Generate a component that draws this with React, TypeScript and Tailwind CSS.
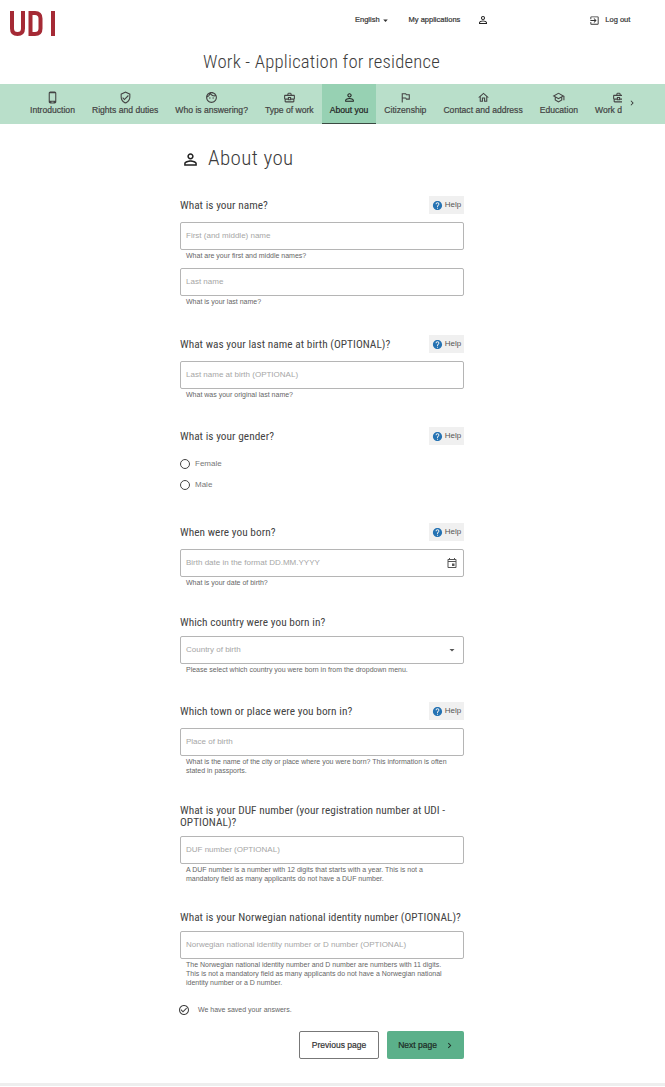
import React from "react";
import {
  MdArrowDropDown,
  MdCheckCircleOutline,
  MdChevronRight,
  MdExitToApp,
  MdHelp,
  MdOutlineBusinessCenter,
  MdOutlineEvent,
  MdOutlineFace,
  MdOutlineHome,
  MdOutlinePhoneAndroid,
  MdOutlineSchool,
  MdOutlineVerifiedUser,
  MdOutlinedFlag,
  MdPersonOutline,
} from "react-icons/md";

const navItems = [
  { label: "Introduction", icon: MdOutlinePhoneAndroid },
  { label: "Rights and duties", icon: MdOutlineVerifiedUser },
  { label: "Who is answering?", icon: MdOutlineFace },
  { label: "Type of work", icon: MdOutlineBusinessCenter },
  { label: "About you", icon: MdPersonOutline, active: true },
  { label: "Citizenship", icon: MdOutlinedFlag },
  { label: "Contact and address", icon: MdOutlineHome },
  { label: "Education", icon: MdOutlineSchool },
  { label: "Work details", icon: MdOutlineBusinessCenter },
];

const HelpButton = () => (
  <button className="flex h-[18px] w-[35px] shrink-0 items-center justify-center gap-[2px] bg-[#f0f0f0] text-[8px] text-[#555]">
    <MdHelp className="text-[11px] text-[#2472b3]" />
    Help
  </button>
);

const Question = ({ children, help, className }: { children: React.ReactNode; help?: boolean; className?: string }) => (
  <div className={`flex items-center justify-between ${className ?? ""}`}>
    <h3 className="translate-y-[1px] whitespace-nowrap font-['Roboto',sans-serif] text-[11.3px] leading-[12px] tracking-[0.05px] text-[#444] [font-stretch:75%]">{children}</h3>
    {help && <HelpButton />}
  </div>
);

const Input = ({ placeholder, icon }: { placeholder: string; icon?: React.ReactNode }) => (
  <div className="flex h-[28px] items-center justify-between rounded-[2px] border border-[#b5b5b5] bg-white pl-[5px] pr-[5px]">
    <span className="pb-[1px] text-[8px] text-[#a6a6a6]">{placeholder}</span>
    {icon}
  </div>
);

const Hint = ({ children }: { children: React.ReactNode }) => (
  <p className="mt-[1px] pl-[6px] text-[7px] leading-[9px] text-[#666]">{children}</p>
);

const Radio = ({ label }: { label: string }) => (
  <div className="flex h-[21px] items-center gap-[5px]">
    <span className="h-[10px] w-[10px] rounded-full border border-[#444]" />
    <span className="text-[8px] text-[#777]">{label}</span>
  </div>
);

export default function App() {
  return (
    <div className="h-[1087px] w-[665px] overflow-hidden bg-white font-['Liberation_Sans',Arial,sans-serif]">
      {/* Header */}
      <header className="relative h-[50px]">
        <svg className="absolute left-[10px] top-[11px]" width="45" height="25" viewBox="0 0 45 25" fill="none" stroke="#a52a35" strokeWidth="4">
          <path d="M2 0V17.5Q2 23 7.5 23Q13 23 13 17.5V0" />
          <path d="M20.5 2H25Q30.5 2 30.5 7.5V17.5Q30.5 23 25 23H20.5Z" />
          <path d="M43 0V25" />
        </svg>
        <div className="flex h-[40px] items-center pl-[355px] text-[7.5px] text-[#333] [-webkit-text-stroke:0.2px]">
          <span className="flex items-center">
            English
            <MdArrowDropDown className="text-[11px]" />
          </span>
          <span className="ml-[18px]">My applications</span>
          <MdPersonOutline className="ml-[17px] text-[12px] text-[#222]" />
          <span className="ml-[100px] flex items-center gap-[5px]">
            <MdExitToApp className="text-[11px]" />
            Log out
          </span>
        </div>
      </header>
      <h1 className="h-[34px] pr-[22px] text-center font-['Roboto',sans-serif] text-[18.7px] font-light leading-[24px] tracking-[0.2px] text-[#3c3c3c] [font-stretch:75%]">
        Work - Application for residence
      </h1>

      {/* Steps */}
      <nav className="flex h-[40px] bg-[#b9dfca] pl-[23px]">
        <div className="flex w-[599px] gap-[3px] overflow-hidden">
          {navItems.map((item) => {
            const Icon = item.icon;
            return (
              <div
                key={item.label}
                className={`flex h-[40px] shrink-0 flex-col items-center pt-[7px] ${
                  item.active ? "-mx-[2px] border-b border-[#3a4a42] bg-[#97d1b3] px-[8px] text-[#222]" : "px-[7px] text-[#444]"
                }`}
              >
                <Icon className="h-[13px] w-[13px]" />
                <span className="mt-[1px] whitespace-nowrap text-[8.6px] leading-[11px] [-webkit-text-stroke:0.2px]">{item.label}</span>
              </div>
            );
          })}
        </div>
        <MdChevronRight className="ml-[5px] mt-[14px] text-[10px] text-[#333]" />
      </nav>

      {/* Form */}
      <main className="ml-[180px] w-[284px]">
        <h2 className="ml-[1px] mt-[23px] flex h-[24px] items-center gap-[8px] font-['Roboto',sans-serif] text-[21px] font-light tracking-[0.4px] text-[#3c3c3c] [font-stretch:75%]">
          <MdPersonOutline className="text-[19px] text-[#222]" />
          About you
        </h2>

        <Question help className="mt-[25px] mb-[8px]">What is your name?</Question>
        <Input placeholder="First (and middle) name" />
        <Hint>What are your first and middle names?</Hint>
        <div className="mt-[8px]">
          <Input placeholder="Last name" />
        </div>
        <Hint>What is your last name?</Hint>

        <Question help className="mt-[29px] mb-[8px]">What was your last name at birth (OPTIONAL)?</Question>
        <Input placeholder="Last name at birth (OPTIONAL)" />
        <Hint>What was your original last name?</Hint>

        <Question help className="mt-[28px] mb-[8px]">What is your gender?</Question>
        <Radio label="Female" />
        <Radio label="Male" />

        <Question help className="mt-[28px] mb-[8px]">When were you born?</Question>
        <Input placeholder="Birth date in the format DD.MM.YYYY" icon={<MdOutlineEvent className="text-[12px] text-[#555]" />} />
        <Hint>What is your date of birth?</Hint>

        <Question className="mt-[29px] mb-[8px]">Which country were you born in?</Question>
        <Input placeholder="Country of birth" icon={<MdArrowDropDown className="text-[12px] text-[#555]" />} />
        <Hint>Please select which country you were born in from the dropdown menu.</Hint>

        <Question help className="mt-[28px] mb-[8px]">Which town or place were you born in?</Question>
        <Input placeholder="Place of birth" />
        <Hint>
          What is the name of the city or place where you were born? This information is often
          <br />
          stated in passports.
        </Hint>

        <Question className="mt-[29px] mb-[8px]">
          What is your DUF number (your registration number at UDI -
          <br />
          OPTIONAL)?
        </Question>
        <Input placeholder="DUF number (OPTIONAL)" />
        <Hint>
          A DUF number is a number with 12 digits that starts with a year. This is not a
          <br />
          mandatory field as many applicants do not have a DUF number.
        </Hint>

        <Question className="mt-[28px] mb-[8px]">What is your Norwegian national identity number (OPTIONAL)?</Question>
        <Input placeholder="Norwegian national identity number or D number (OPTIONAL)" />
        <Hint>
          The Norwegian national identity number and D number are numbers with 11 digits.
          <br />
          This is not a mandatory field as many applicants do not have a Norwegian national
          <br />
          identity number or a D number.
        </Hint>

        <div className="-ml-[2px] mt-[17px] flex h-[12px] items-center gap-[8px] text-[7px] text-[#666]">
          <MdCheckCircleOutline className="text-[12px] text-[#444]" />
          We have saved your answers.
        </div>

        <div className="mt-[15px] flex justify-end gap-[8px]">
          <button className="h-[28px] w-[80px] rounded-[2px] border border-[#777] bg-white text-[8.5px] text-[#333] [-webkit-text-stroke:0.2px]">
            Previous page
          </button>
          <button className="flex h-[28px] w-[77px] items-center justify-center gap-[7px] rounded-[2px] bg-[#5bb08a] pl-[2px] text-[8.5px] text-[#1c2b24] [-webkit-text-stroke:0.2px]">
            Next page
            <MdChevronRight className="text-[11px]" />
          </button>
        </div>
      </main>
      <div className="mt-[24px] h-[3px] bg-[#eeeeee]" />
    </div>
  );
}
